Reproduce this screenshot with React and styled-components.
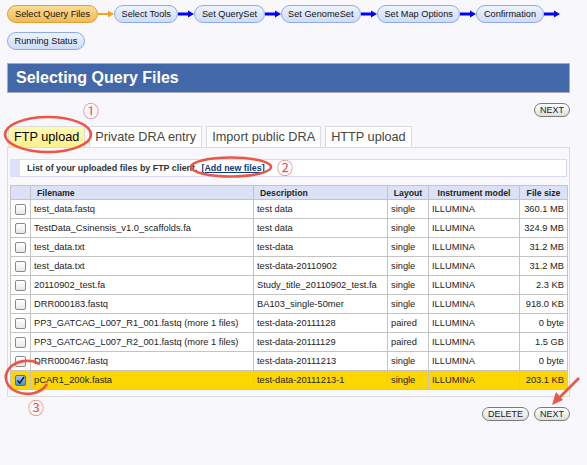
import React from "react";
import styled, { createGlobalStyle } from "styled-components";

const Global = createGlobalStyle`
  html, body { margin: 0; padding: 0; background: #f8f8fc; }
  body { font-family: "Liberation Sans", Arial, sans-serif; color: #111; }
`;

const Page = styled.div`
  position: relative;
  width: 587px;
  height: 465px;
  box-sizing: border-box;
  padding: 5px 17px 0 7px;
  overflow: hidden;
`;

const Steps = styled.div`
  display: flex;
  flex-wrap: wrap;
  align-items: center;
  row-gap: 9px;
  margin-right: -12px;
`;

const Pill = styled.div`
  height: 16px;
  line-height: 16px;
  padding: 0 ${(p) => (p.$active ? 7 : 6.5)}px;
  border-radius: 9px;
  font-size: 9.2px;
  color: #111;
  white-space: nowrap;
  border: 1px solid ${(p) => (p.$active ? "#e0a034" : "#8eaaea")};
  background: ${(p) =>
    p.$active
      ? "linear-gradient(#fcdc98, #f3b955)"
      : "linear-gradient(#eef3fe, #cddcf8)"};
`;

const Arrow = ({ color, thick }) => (
  <svg width="16" height="8" viewBox="0 0 16 8" style={{ display: "block" }}>
    <line x1="0" y1="4" x2="11" y2="4" stroke={color} strokeWidth={thick} />
    <polygon points="10,0.5 16,4 10,7.5" fill={color} />
  </svg>
);

const Header = styled.div`
  margin-top: 13px;
  height: 28px;
  border: 1px solid #a9acb8;
  background: #4368a9;
  display: flex;
  align-items: center;
  padding-left: 8px;
`;

const Title = styled.h1`
  margin: 0;
  font-size: 16px;
  font-weight: bold;
  color: #fff;
`;

const Actions = styled.div`
  display: flex;
  justify-content: flex-end;
  gap: 5px;
  margin-top: ${(p) => p.$top}px;
`;

const Btn = styled.button`
  height: 14px;
  padding: 0 5px;
  border-radius: 7px;
  border: 1px solid #7a7a7a;
  background: linear-gradient(#ffffff, #dedede);
  font-family: "Liberation Sans", Arial, sans-serif;
  font-size: 9px;
  color: #222;
  line-height: 12px;
  cursor: pointer;
`;

const Tabs = styled.div`
  display: flex;
  gap: 4px;
  margin-top: 9px;
  padding-left: 1px;
`;

const Tab = styled.div`
  height: 21px;
  box-sizing: border-box;
  line-height: 20px;
  padding: 0 5px;
  border: 1px solid #dcdcdc;
  border-bottom: none;
  font-size: 12.7px;
  color: ${(p) => (p.$active ? "#000" : "#444")};
  background: ${(p) => (p.$active ? "linear-gradient(#fffbb8, #fcf08c)" : "#fff")};
`;

const Panel = styled.div`
  border: 1px solid #dcdcdc;
  padding: 11px 2px 6px 2px;
`;

const Info = styled.div`
  height: 18px;
  box-sizing: border-box;
  border: 1px solid #d8d8f2;
  border-left: 10px solid #e0e0f8;
  background: #fff;
  display: flex;
  align-items: center;
  padding-left: 7px;
  font-size: 8.9px;
  font-weight: bold;
  color: #333;
`;

const AddLink = styled.a`
  margin-left: 4px;
  color: #0b3b7a;
  text-decoration: underline;
`;

const Table = styled.table`
  margin-top: 8px;
  width: 557px;
  border-collapse: collapse;
  table-layout: fixed;
  font-size: 9.3px;
`;

const Th = styled.th`
  height: 13px;
  padding: ${(p) => (p.$align === "left" ? "0 0 0 6px" : "0")};
  text-align: ${(p) => p.$align || "center"};
  background: #dbe2f7;
  border: 1px solid #c4c4c4;
  font-size: 8.7px;
  font-weight: bold;
  color: #222;
  white-space: nowrap;
`;

const Tr = styled.tr`
  background: ${(p) => (p.$selected ? "#fdd600" : "#fff")};
`;

const Td = styled.td`
  height: 18px;
  padding: 0 3px;
  border: 1px solid #c4c4c4;
  text-align: ${(p) => p.$align || "left"};
  color: #222;
  white-space: nowrap;
  overflow: hidden;
`;

const Box = styled.span`
  display: block;
  margin: 0 auto;
  width: 9px;
  height: 9px;
  border: 1px solid ${(p) => (p.$checked ? "#3d6fb5" : "#8a8a8a")};
  border-radius: 2px;
  background: ${(p) => (p.$checked ? "linear-gradient(#9cc6f5, #4f8fdc)" : "linear-gradient(#fff, #e8e8e8)")};
  position: relative;
`;

const Overlay = styled.svg`
  position: absolute;
  left: 0;
  top: 0;
  pointer-events: none;
`;

const Mark = styled.span`
  position: absolute;
  left: ${(p) => p.$x}px;
  top: ${(p) => p.$y}px;
  font-family: "Noto Sans CJK JP", "DejaVu Sans", sans-serif;
  font-size: 16px;
  line-height: 16px;
  color: #ec5648;
`;

const rows = [
  ["test_data.fastq", "test data", "single", "360.1 MB"],
  ["TestData_Csinensis_v1.0_scaffolds.fa", "test data", "single", "324.9 MB"],
  ["test_data.txt", "test-data", "single", "31.2 MB"],
  ["test_data.txt", "test-data-20110902", "single", "31.2 MB"],
  ["20110902_test.fa", "Study_title_20110902_test.fa", "single", "2.3 KB"],
  ["DRR000183.fastq", "BA103_single-50mer", "single", "918.0 KB"],
  ["PP3_GATCAG_L007_R1_001.fastq (more 1 files)", "test-data-20111128", "paired", "0 byte"],
  ["PP3_GATCAG_L007_R2_001.fastq (more 1 files)", "test-data-20111129", "paired", "1.5 GB"],
  ["DRR000467.fastq", "test-data-20111213", "single", "0 byte"],
  ["pCAR1_200k.fasta", "test-data-20111213-1", "single", "203.1 KB", true],
];

const steps = ["Select Tools", "Set QuerySet", "Set GenomeSet", "Set Map Options", "Confirmation"];

export default function App() {
  return (
    <>
      <Global />
      <Page>
        <Steps>
          <Pill $active>Select Query Files</Pill>
          <Arrow color="#f5a31f" thick={2} />
          {steps.map((s) => (
            <React.Fragment key={s}>
              <Pill>{s}</Pill>
              <Arrow color="#0000ff" thick={3} />
            </React.Fragment>
          ))}
          <Pill>Running Status</Pill>
        </Steps>

        <Header>
          <Title>Selecting Query Files</Title>
        </Header>

        <Actions $top={10}>
          <Btn>NEXT</Btn>
        </Actions>

        <Tabs>
          <Tab $active>FTP upload</Tab>
          <Tab>Private DRA entry</Tab>
          <Tab>Import public DRA</Tab>
          <Tab>HTTP upload</Tab>
        </Tabs>

        <Panel>
          <Info>
            List of your uploaded files by FTP client.
            <AddLink href="#">[Add new files]</AddLink>
          </Info>
          <Table>
            <colgroup>
              <col style={{ width: 20 }} />
              <col style={{ width: 223 }} />
              <col style={{ width: 134 }} />
              <col style={{ width: 41 }} />
              <col style={{ width: 91 }} />
              <col style={{ width: 48 }} />
            </colgroup>
            <thead>
              <tr>
                <Th />
                <Th $align="left">Filename</Th>
                <Th $align="left">Description</Th>
                <Th>Layout</Th>
                <Th>Instrument model</Th>
                <Th>File size</Th>
              </tr>
            </thead>
            <tbody>
              {rows.map(([f, d, l, s, sel], i) => (
                <Tr key={i} $selected={sel}>
                  <Td>
                    <Box $checked={sel}>
                      {sel && (
                        <svg width="9" height="9" viewBox="0 0 9 9" style={{ position: "absolute", left: 0, top: 0 }}>
                          <path d="M1.5 4.5 L3.8 7 L8 1" stroke="#10233f" strokeWidth="1.6" fill="none" />
                        </svg>
                      )}
                    </Box>
                  </Td>
                  <Td>{f}</Td>
                  <Td>{d}</Td>
                  <Td>{l}</Td>
                  <Td>ILLUMINA</Td>
                  <Td $align="right">{s}</Td>
                </Tr>
              ))}
            </tbody>
          </Table>
        </Panel>

        <Actions $top={10}>
          <Btn>DELETE</Btn>
          <Btn>NEXT</Btn>
        </Actions>

        <Overlay width="587" height="465" viewBox="0 0 587 465">
          <g fill="none" stroke="#ec5648" strokeWidth="2.6">
            <ellipse cx="48" cy="134.5" rx="43" ry="17.5" />
            <ellipse cx="231" cy="167" rx="40" ry="9.5" />
            <path d="M40 364 A21.5 16.5 0 1 0 47 384" />
            <line x1="579" y1="378" x2="558" y2="399" />
          </g>
          <polygon points="552,405 563,400 556,392" fill="#ec5648" />
        </Overlay>
        <Mark $x={83} $y={102}>①</Mark>
        <Mark $x={277} $y={159}>②</Mark>
        <Mark $x={28} $y={399}>③</Mark>
      </Page>
    </>
  );
}
